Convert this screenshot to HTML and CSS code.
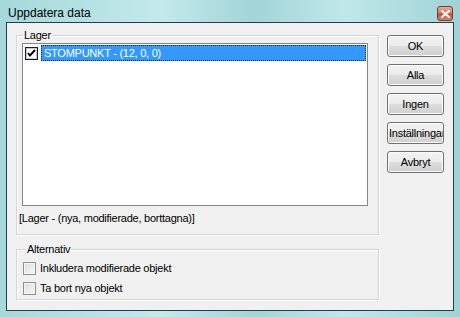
FILE: index.html
```html
<!DOCTYPE html>
<html lang="sv">
<head>
    <meta charset="UTF-8">
    <title>Uppdatera data</title>
    <link rel="stylesheet" href="styles.css">
</head>
<body>
    <div class="window">
        <div class="titlebar">
            <span class="title">Uppdatera data</span>
            <span class="close-btn">
                <svg width="9" height="8" viewBox="0 0 9 8">
                    <path d="M1 1 L8 7 M8 1 L1 7" stroke="#ffffff" stroke-width="2" stroke-linecap="square"/>
                </svg>
            </span>
        </div>
        <div class="client">
            <div class="left-col">
                <fieldset class="group group-lager">
                    <legend>Lager</legend>
                    <div class="listbox">
                        <div class="list-item">
                            <span class="check checked">
                                <svg width="11" height="11" viewBox="0 0 11 11">
                                    <path d="M2 5 L4 7.5 L9 2" fill="none" stroke="#000000" stroke-width="2"/>
                                </svg>
                            </span>
                            <span class="item-text">STOMPUNKT - (12, 0, 0)</span>
                        </div>
                    </div>
                    <div class="caption">[Lager - (nya, modifierade, borttagna)]</div>
                </fieldset>
                <fieldset class="group group-alt">
                    <legend>Alternativ</legend>
                    <label class="option"><span class="check"></span>Inkludera modifierade objekt</label>
                    <label class="option"><span class="check"></span>Ta bort nya objekt</label>
                </fieldset>
            </div>
            <div class="buttons">
                <button class="btn">OK</button>
                <button class="btn">Alla</button>
                <button class="btn">Ingen</button>
                <button class="btn"><span class="btn-label">Inställningar</span></button>
                <button class="btn">Avbryt</button>
            </div>
        </div>
    </div>
</body>
</html>
```

FILE: styles.css
```css
* {
    margin: 0;
    padding: 0;
    box-sizing: border-box;
}

body {
    font-family: "Liberation Sans", Arial, sans-serif;
    font-size: 11px;
    letter-spacing: -0.25px;
    color: #000000;
    background: #a9dadc;
}

.window {
    width: 460px;
    height: 317px;
    display: flex;
    flex-direction: column;
    background: linear-gradient(to right, #a6d8db 0%, #c3e9eb 35%, #a2d4d8 55%, #c0e7e9 75%, #9fd3d6 100%);
}

.titlebar {
    height: 22px;
    display: flex;
    justify-content: space-between;
    align-items: flex-start;
    padding: 0 7px 0 8px;
}

.title {
    font-size: 12px;
    letter-spacing: 0;
    line-height: 16px;
    margin-top: 5px;
    color: #000000;
}

.close-btn {
    width: 16px;
    height: 15px;
    margin-top: 6px;
    border: 1px solid #7a3a2e;
    border-radius: 3px;
    background: linear-gradient(#eaa898 0%, #d77a66 45%, #c6503a 55%, #d8826a 100%);
    display: flex;
    align-items: center;
    justify-content: center;
}

.client {
    flex: 1;
    margin: 0 6px 6px 6px;
    border: 1px solid #263f44;
    background: #f0f0f0;
    display: flex;
    padding: 6px 0 0 9px;
    gap: 8px;
}

.left-col {
    display: flex;
    flex-direction: column;
    gap: 8px;
}

.group {
    width: 363px;
    border: 1px solid #d5d5d5;
    box-shadow: inset 1px 1px 0 #ffffff, 1px 1px 0 #ffffff;
}

.group legend {
    margin-left: 3px;
    padding: 0 1px;
    line-height: 13px;
}

.group-lager {
    height: 206px;
    padding: 1px 0 0 3px;
}

.listbox {
    width: 346px;
    height: 163px;
    margin-left: 2px;
    border: 1px solid #828790;
    background: #ffffff;
    padding: 1px 0 0 2px;
}

.list-item {
    display: flex;
    align-items: center;
    height: 16px;
}

.check {
    width: 13px;
    height: 13px;
    border: 1px solid #8e8f8f;
    background: linear-gradient(135deg, #dcdcdc, #f8f8f8);
    box-shadow: inset 0 0 0 1px #f4f4f4;
    flex-shrink: 0;
}

.check.checked {
    border-color: #1c1c1c;
    background: #ffffff;
    box-shadow: inset 0 0 0 1px #c8c8c8;
    display: flex;
    align-items: center;
    justify-content: center;
    margin-right: 3px;
}

.item-text {
    flex: 1;
    height: 16px;
    line-height: 14px;
    padding-left: 2px;
    margin-right: 1px;
    background: #3399ff;
    color: #ffffff;
    border: 1px dotted #1b2c4a;
}

.caption {
    margin-top: 6px;
    margin-left: -1px;
    line-height: 13px;
}

.group-alt {
    height: 57px;
    padding: 6px 0 3px 6px;
    display: flex;
    flex-direction: column;
    gap: 7px;
}

.option {
    display: flex;
    align-items: center;
    gap: 4px;
    height: 13px;
    line-height: 13px;
}

.buttons {
    display: flex;
    flex-direction: column;
    gap: 7px;
    padding-top: 6px;
}

.btn {
    width: 57px;
    height: 22px;
    padding: 0;
    font-family: "Liberation Sans", Arial, sans-serif;
    font-size: 11px;
    letter-spacing: -0.25px;
    color: #000000;
    border: 1px solid #707070;
    border-radius: 3px;
    background: linear-gradient(#f2f2f2 0%, #ebebeb 50%, #dddddd 51%, #cfcfcf 100%);
    box-shadow: inset 0 0 0 1px #fcfcfc;
    overflow: hidden;
    white-space: nowrap;
}

.btn-label {
    display: block;
    text-align: left;
    padding-left: 1px;
}
```
